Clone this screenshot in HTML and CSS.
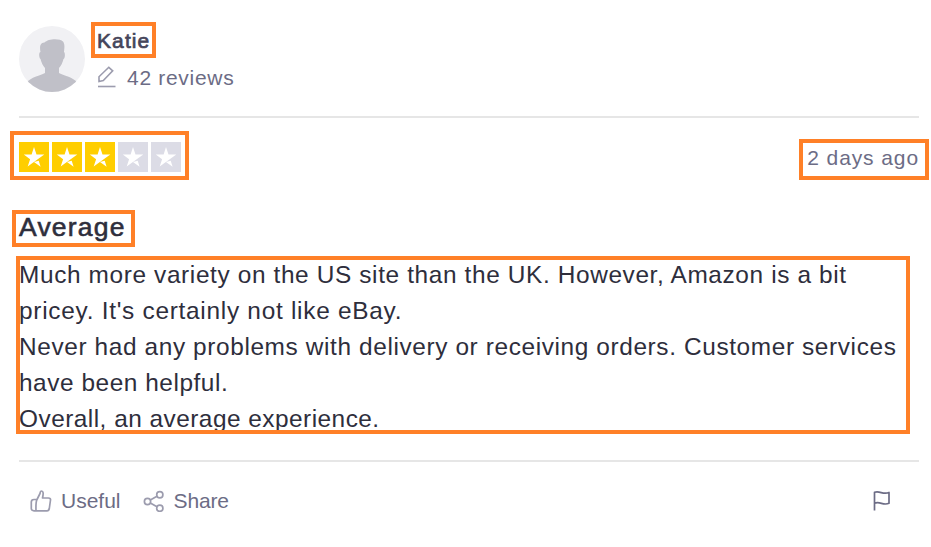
FILE: index.html
```html
<!DOCTYPE html>
<html lang="en">
<head>
<meta charset="utf-8">
<title>Review</title>
<link rel="stylesheet" href="styles.css">
</head>
<body>
<article class="review">
  <header class="consumer">
    <svg class="avatar" viewBox="0 0 66 66">
      <defs><clipPath id="round"><circle cx="33" cy="33" r="33"/></clipPath></defs>
      <g clip-path="url(#round)">
        <rect width="66" height="66" fill="#f1f1f4"/>
        <path fill="#c0c0c8" d="M21.500 26C20.500 20 21 17 25.500 16.500C29 12.500 41 12 44 15.500C46 18 45.500 22 45 26C46.500 27 46 33 44.500 33C43.500 37 42 40 40 42V47C44 49.500 50 49.500 57 55L66 66H0L9 55C16 49.500 22 49.500 26 47V42C24 40 22.500 37 21.500 33C20 32 19.500 26 21.500 26Z"/>
      </g>
    </svg>
    <div class="consumer-info">
      <div class="name"><span class="mark mark-name">Katie</span></div>
      <div class="count">
        <svg class="icon-pen" viewBox="0 0 20 22"><path d="M2 15.500V10.800L11.800 1.300L15.700 4.800L6.300 14.600Z"/><path d="M1 20.500H18.500"/></svg>
        <span>42 reviews</span>
      </div>
    </div>
  </header>
  <div class="rating">
    <div class="stars mark mark-stars">
      <svg class="star on" viewBox="0 0 30 30"><path d="M15 5L17.500 12.500H25.300L12.800 21.500L8.700 24.500L11.100 17.200L4.800 12.500H12.600ZM15 20L19.700 18.800L21.600 24.700Z"/></svg>
      <svg class="star on" viewBox="0 0 30 30"><path d="M15 5L17.500 12.500H25.300L12.800 21.500L8.700 24.500L11.100 17.200L4.800 12.500H12.600ZM15 20L19.700 18.800L21.600 24.700Z"/></svg>
      <svg class="star on" viewBox="0 0 30 30"><path d="M15 5L17.500 12.500H25.300L12.800 21.500L8.700 24.500L11.100 17.200L4.800 12.500H12.600ZM15 20L19.700 18.800L21.600 24.700Z"/></svg>
      <svg class="star" viewBox="0 0 30 30"><path d="M15 5L17.500 12.500H25.300L12.800 21.500L8.700 24.500L11.100 17.200L4.800 12.500H12.600ZM15 20L19.700 18.800L21.600 24.700Z"/></svg>
      <svg class="star" viewBox="0 0 30 30"><path d="M15 5L17.500 12.500H25.300L12.800 21.500L8.700 24.500L11.100 17.200L4.800 12.500H12.600ZM15 20L19.700 18.800L21.600 24.700Z"/></svg>
    </div>
    <time class="date mark mark-date">2 days ago</time>
  </div>
  <h2 class="title"><span class="mark mark-title">Average</span></h2>
  <p class="text mark mark-text"><span class="l1">Much more variety on the US site than the UK. However, Amazon is a bit</span><br><span class="l2">pricey. It's certainly not like eBay.</span><br><span class="l3">Never had any problems with delivery or receiving orders. Customer services</span><br><span class="l4">have been helpful.</span><br><span class="l5">Overall, an average experience.</span></p>
  <footer class="actions">
    <div class="action useful">
      <svg class="icon" viewBox="0 0 22 22"><path d="M7 9.500L10 3.500C10.300 1.500 10.700 1 11.500 1C13.500 1 13.500 3.500 12.500 8H18.500C20 8 20.700 8.800 20.500 10L19.300 18.500C19 20.300 18 20.800 17 20.800H4C2.300 20.800 1.300 20 1.300 18.500V12C1.300 10 2.300 9.500 4 9.500H7C5.800 11.500 5.800 15 6 20.800"/></svg>
      <span>Useful</span>
    </div>
    <div class="action share">
      <svg class="icon" viewBox="0 0 22 22"><circle cx="4.500" cy="11.500" r="3.100"/><circle cx="16.800" cy="4.800" r="3.100"/><circle cx="16.800" cy="18.200" r="3.100"/><path d="M7.300 10L14 6.300M7.300 13L14 16.800"/></svg>
      <span>Share</span>
    </div>
    <svg class="icon flag" viewBox="0 0 20 22"><path d="M2.500 20.500V2.300C8 .5 11 5 17 2.500V13.300C11 16 8 10.800 2.500 13.300"/></svg>
  </footer>
</article>
</body>
</html>
```

FILE: styles.css
```css
*, *::after { box-sizing: border-box; }
body {
  margin: 0;
  background: #fff;
  color: #2e2e3c;
  font-family: "Liberation Sans", Arial, sans-serif;
}
svg { display: block; flex: none; }
.review { width: 931px; height: 547px; padding: 0 12px 0 19px; overflow: hidden; }
.consumer {
  display: flex;
  gap: 12px;
  width: 900px;
  height: 118px;
  padding-top: 26px;
  border-bottom: 2px solid #e6e6e6;
}
.avatar { width: 66px; height: 66px; }
.name {
  height: 30px;
  line-height: 30px;
  font-size: 21px;
  letter-spacing: 1.1px;
  color: #45455a;
  -webkit-text-stroke: .7px;
}
.count {
  display: flex;
  gap: 10px;
  height: 42px;
  line-height: 44px;
  font-size: 21px;
  letter-spacing: .7px;
  color: #6c6c85;
}
.icon-pen {
  width: 20px;
  height: 22px;
  margin-top: 10px;
  fill: none;
  stroke: #9c9cae;
  stroke-width: 1.6;
}
.rating {
  display: flex;
  justify-content: space-between;
  width: 900px;
  height: 80px;
  padding-top: 24px;
}
.stars { display: flex; gap: 3px; height: 30px; }
.star { width: 30px; height: 30px; background: #dcdce6; fill: #fff; }
.star.on { background: #ffce00; }
.date { height: 32px; line-height: 32px; font-size: 21px; letter-spacing: .9px; color: #6c6c85; }
.title {
  height: 59px;
  margin: 0;
  font-size: 26.5px;
  line-height: 58px;
  font-weight: 400;
  letter-spacing: 1.2px;
  -webkit-text-stroke: .6px;
}
.text {
  width: 900px;
  height: 205px;
  margin: 0;
  border-bottom: 2px solid #e6e6e6;
  font-size: 24.4px;
  line-height: 36px;
  white-space: nowrap;
}
.l1 { letter-spacing: .63px; }
.l2 { letter-spacing: .73px; }
.l3 { letter-spacing: .62px; }
.l4 { letter-spacing: .55px; }
.l5 { letter-spacing: .48px; }
.mark { position: relative; }
.mark::after { content: ""; position: absolute; border: 4px solid #ff8027; }
.mark-name::after { left: -6px; top: -7px; width: 65px; height: 36px; }
.mark-stars::after { left: -9px; top: -11px; width: 179px; height: 49px; }
.mark-date::after { right: -10px; top: -3px; width: 130px; height: 41px; }
.mark-title::after { left: -7px; top: -2px; width: 123px; height: 37px; }
.mark-text::after { left: -3px; top: -1px; width: 894px; height: 178px; }
.actions {
  display: flex;
  width: 900px;
  height: 85px;
  padding: 28px 27px 0 11px;
  color: #6c6c85;
  font-size: 21px;
  line-height: 22px;
}
.action { display: flex; gap: 9px; height: 24px; }
.share { margin-left: 22px; letter-spacing: -.15px; }
.icon { width: 22px; height: 22px; fill: none; stroke: #9c9cae; stroke-width: 1.7; stroke-linejoin: round; }
.flag { width: 20px; margin-left: auto; stroke: #6c6c85; }
```
